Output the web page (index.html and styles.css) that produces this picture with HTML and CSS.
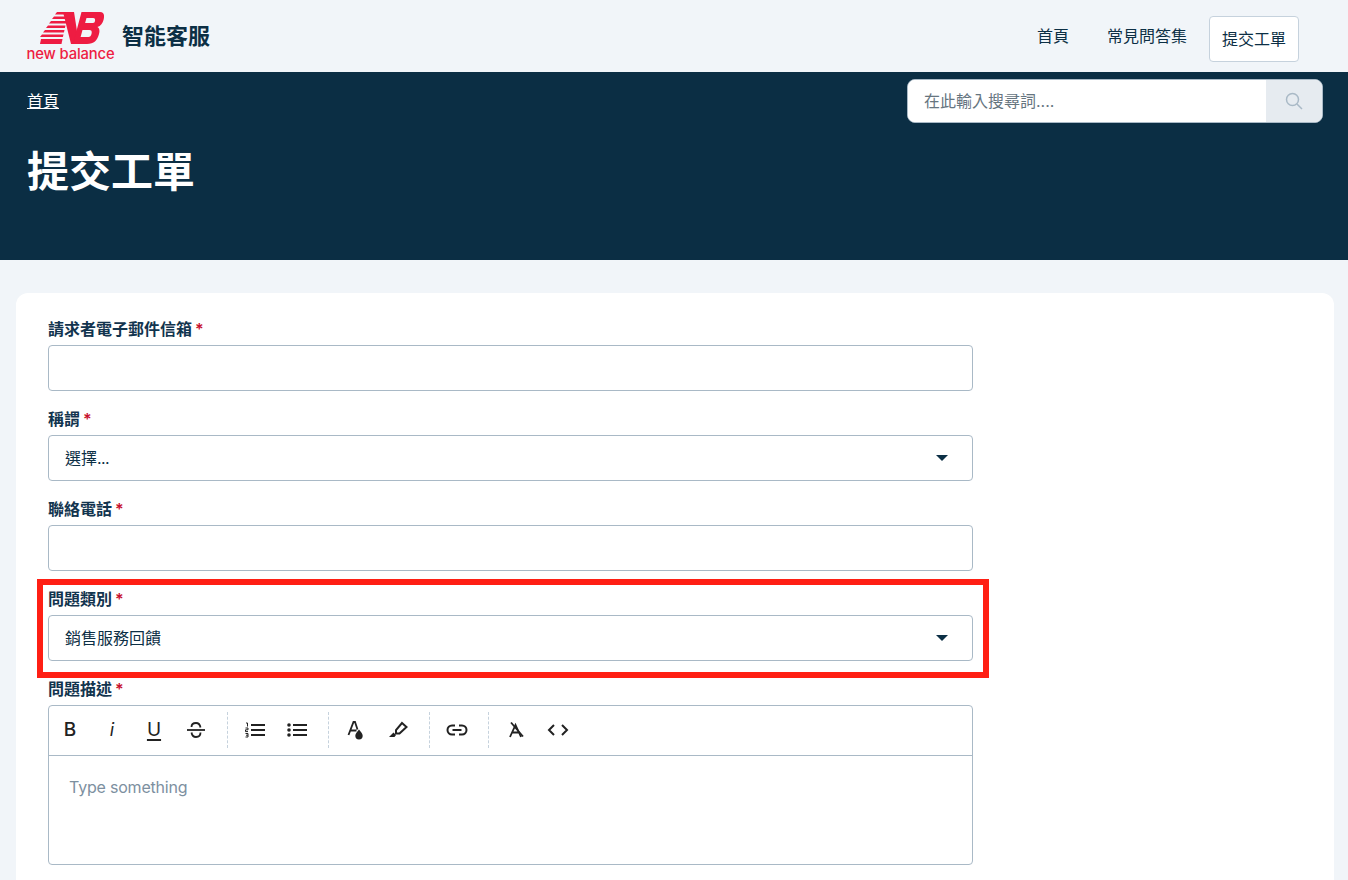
FILE: index.html
```html
<!DOCTYPE html>
<html lang="zh-Hant">
<head>
<meta charset="utf-8">
<title>提交工單</title>
<link rel="stylesheet" href="styles.css">
</head>
<body>
<header class="topbar">
  <a class="brand" href="#">
    <span class="logo">
      <svg class="logo-mark" width="64" height="32" viewBox="0 0 64 32">
        <g fill="#ee1c42">
          <path d="M17 0h17l-1 2.600H15zM14 4.500h18l-1 2.600H12zM11 9h19l-1 2.600H9zM8 13.500h17.500l-.6 2.600H6zM5 18h19.500l-.6 2.600H3zM2 22.500h21.500l-.6 2.600H0z"/>
          <path d="M1 27h21.500l-1 5H0z"/>
          <path d="M23 0h11l5 32h-8z"/>
          <path fill-rule="evenodd" d="M34 0h26c4.500 0 4.500 4 3.500 8-.8 3-2.800 6-6 7 2 1.200 2.400 3.500 1.500 7-1.700 6.500-5 10-12 10H33l8.500-32zM46.500 6l-1.400 5h7.900c1.200 0 1.800-.8 2-2.200.3-1.800-.3-2.800-1.800-2.800zM42.500 18l-1.900 7h7.900c1.500 0 2.500-1 3-3 .6-2.500 0-4-2-4z"/>
        </g>
      </svg>
      <span class="logo-word">new balance</span>
    </span>
    <span class="brand-name">智能客服</span>
  </a>
  <nav class="nav">
    <a class="nav-link" href="#">首頁</a>
    <a class="nav-link" href="#">常見問答集</a>
    <a class="nav-link nav-active" href="#">提交工單</a>
  </nav>
</header>

<section class="hero">
  <div class="hero-top">
    <a class="crumb" href="#">首頁</a>
    <form class="search">
      <input class="search-input" type="text" placeholder="在此輸入搜尋詞....">
      <span class="search-btn">
        <svg width="18" height="18" viewBox="0 0 18 18" fill="none" stroke="#a9b9c6" stroke-width="1.500"><circle cx="7.500" cy="7.500" r="6"/><path d="M12 12l5 5"/></svg>
      </span>
    </form>
  </div>
  <h1 class="title">提交工單</h1>
</section>

<main class="card">
  <div class="field">
    <label class="label">請求者電子郵件信箱 <span class="req">*</span></label>
    <div class="control"></div>
  </div>
  <div class="field">
    <label class="label">稱謂 <span class="req">*</span></label>
    <div class="control select">選擇<span class="dots">...</span><span class="caret"></span></div>
  </div>
  <div class="field">
    <label class="label">聯絡電話 <span class="req">*</span></label>
    <div class="control"></div>
  </div>
  <div class="field highlighted">
    <label class="label">問題類別 <span class="req">*</span></label>
    <div class="control select">銷售服務回饋<span class="caret"></span></div>
    <span class="annotation"></span>
  </div>
  <div class="field">
    <label class="label">問題描述 <span class="req">*</span></label>
    <div class="editor">
      <div class="toolbar">
        <div class="tool-group first">
          <span class="tool tool-b">B</span>
          <span class="tool tool-i">i</span>
          <span class="tool tool-u">U</span>
          <span class="tool tool-s">
            <svg width="20" height="18" viewBox="0 0 20 18" fill="none" stroke="#222" stroke-width="1.800"><path d="M1 9h18"/><path d="M14.500 6.500C14 3.500 12 2 10 2 7.500 2 5.500 3.500 5.500 6M5.500 11.500C6 14.500 8 16 10 16c2.500 0 4.500-1.500 4.500-4.500"/></svg>
          </span>
        </div>
        <div class="tool-group">
          <span class="tool">
            <svg width="20" height="16" viewBox="0 0 20 16" fill="none" stroke="#222" stroke-width="2"><path d="M6 3h14M6 8h14M6 13h14"/><path d="M1 1h1.500v3.500M.500 6h2.500v1.800H.500v1.800h2.500M.500 11.500h2.500v3.500H.500M1 13.200h2" stroke-width="1"/></svg>
          </span>
          <span class="tool">
            <svg width="20" height="16" viewBox="0 0 20 16" fill="none" stroke="#222" stroke-width="2"><path d="M6 3h14M6 8h14M6 13h14"/><g fill="#222" stroke="none"><circle cx="2" cy="3" r="1.800"/><circle cx="2" cy="8" r="1.800"/><circle cx="2" cy="13" r="1.800"/></g></svg>
          </span>
        </div>
        <div class="tool-group">
          <span class="tool">
            <svg width="18" height="20" viewBox="0 0 18 20" fill="none" stroke="#222" stroke-width="1.800"><path d="M1.500 15L6.500 2h1.500l2.500 7.500M3.500 10.500h6"/><path d="M12 9.500c1.900 2.600 3.700 4 3.700 6.200a3.700 3.700 0 0 1-7.400 0c0-2.200 1.800-3.600 3.700-6.200z" fill="#222" stroke="none"/></svg>
          </span>
          <span class="tool">
            <svg width="20" height="18" viewBox="0 0 20 18" fill="none" stroke="#222" stroke-width="2"><path d="M14 2l4.500 4-7 6.500H8V9z"/><path d="M5.500 11.500L1 16h5.500l1.500-2z" fill="#222" stroke="none"/></svg>
          </span>
        </div>
        <div class="tool-group">
          <span class="tool">
            <svg width="22" height="12" viewBox="0 0 22 12" fill="none" stroke="#222" stroke-width="2"><path d="M9 1.500H6a4.500 4.500 0 0 0 0 9h3M13 1.500h3a4.500 4.500 0 0 1 0 9h-3M6.500 6h9"/></svg>
          </span>
        </div>
        <div class="tool-group">
          <span class="tool">
            <svg width="18" height="18" viewBox="0 0 18 18" fill="none" stroke="#222" stroke-width="1.800"><path d="M3 16L8.500 4 14 16M5 11.500h7"/><path d="M4 1.500l12 14"/></svg>
          </span>
          <span class="tool">
            <svg width="22" height="14" viewBox="0 0 22 14" fill="none" stroke="#222" stroke-width="2"><path d="M7 2L2 7l5 5M15 2l5 5-5 5"/></svg>
          </span>
        </div>
      </div>
      <div class="editor-body">Type something</div>
    </div>
  </div>
</main>
</body>
</html>
```
FILE: styles.css
```css
* { box-sizing: border-box; }
html, body { margin: 0; height: 880px; overflow: hidden; }
body {
  background: #f1f5f9;
  color: #0c2f45;
  font-family: Inter, "Noto Sans CJK TC", sans-serif;
  font-size: 16px;
}
a { color: inherit; text-decoration: none; }

.topbar {
  height: 72px;
  display: flex;
  align-items: center;
  justify-content: space-between;
  padding: 0 49px 0 27px;
}
.brand { display: flex; align-items: center; gap: 8px; }
.logo { display: flex; flex-direction: column; align-items: center; width: 87px; margin-top: 2px; }
.logo-mark { display: block; margin-left: 3px; margin-bottom: 3px; }
.logo-word {
  color: #ee1c42;
  font-family: Inter, sans-serif;
  font-size: 14.800px;
  font-weight: 500;
  letter-spacing: -.15px;
  line-height: 15px;
  white-space: nowrap;
}
.brand-name { font-size: 22px; font-weight: 700; line-height: 30px; }

.nav { display: flex; align-items: center; gap: 6px; }
.nav-link { padding: 0 16px; line-height: 24px; }
.nav-active {
  background: #fff;
  border: 1px solid #c6d2dd;
  border-radius: 4px;
  height: 46px;
  line-height: 44px;
  margin-top: 6px;
  padding: 0 12px;
}

.hero {
  height: 188px;
  background: #0b2e44;
  color: #fff;
  padding: 7px 25px 0 27px;
}
.hero-top { display: flex; justify-content: space-between; align-items: flex-start; }
.crumb { text-decoration: underline; line-height: 44px; }
.search {
  width: 416px;
  height: 44px;
  margin: 0;
  display: flex;
  background: #fff;
  border: 1px solid #a9b9c6;
  border-radius: 8px;
  overflow: hidden;
}
.search-input {
  flex: 1;
  min-width: 0;
  border: 0;
  outline: 0;
  padding: 0 16px;
  font: inherit;
  color: #0c2f45;
}
.search-input::placeholder { color: #66757f; opacity: 1; }
.search-btn {
  width: 56px;
  background: #e6ebf0;
  display: flex;
  align-items: center;
  justify-content: center;
}
.title { margin: 19px 0 0; font-size: 42px; font-weight: 700; line-height: 60px; }

.card {
  margin: 33px 14px 0 16px;
  background: #fff;
  border-radius: 12px;
  height: 620px;
  padding: 24px 32px;
}
.field { position: relative; width: 925px; margin-bottom: 16px; }
.label {
  display: block;
  height: 28px;
  font-weight: 600;
  line-height: 24px;
  color: #12344e;
  word-spacing: -1px;
}
.req { color: #c8102e; }
.control {
  height: 46px;
  border: 1px solid #a9b9c6;
  border-radius: 4px;
  background: #fff;
  line-height: 44px;
  padding: 0 16px;
  position: relative;
}
.dots { letter-spacing: -.6px; }
.caret {
  position: absolute;
  right: 24px;
  top: 19px;
  border: 6px solid transparent;
  border-top: 6px solid #0c2f45;
  border-bottom: 0;
}
.annotation {
  position: absolute;
  left: -11px;
  right: -16px;
  top: -8px;
  height: 99px;
  border: 6px solid #ff1f14;
  pointer-events: none;
}
.highlighted { z-index: 1; }

.editor { border: 1px solid #a9b9c6; border-radius: 4px; background: #fff; height: 160px; }
.toolbar {
  height: 50px;
  border-bottom: 1px solid #a9b9c6;
  display: flex;
  align-items: center;
  padding-bottom: 2px;
}
.tool-group {
  display: flex;
  align-items: center;
  height: 36px;
  padding-left: 6px;
  border-left: 1px dashed #c6d2dd;
  margin-right: 10px;
}
.tool-group.first { border-left: 0; padding-left: 0; }
.tool {
  width: 42px;
  height: 36px;
  display: flex;
  align-items: center;
  justify-content: center;
  color: #222;
  font-size: 19px;
  line-height: 1;
}
.tool-b { font-weight: 500; }
.tool-i { font-style: italic; font-size: 18px; }
.tool-u { text-decoration: underline; text-decoration-thickness: 2px; text-underline-offset: 3px; }
.editor-body { padding: 19px 20px; color: #7d909f; line-height: 24px; letter-spacing: -.2px; }
```
